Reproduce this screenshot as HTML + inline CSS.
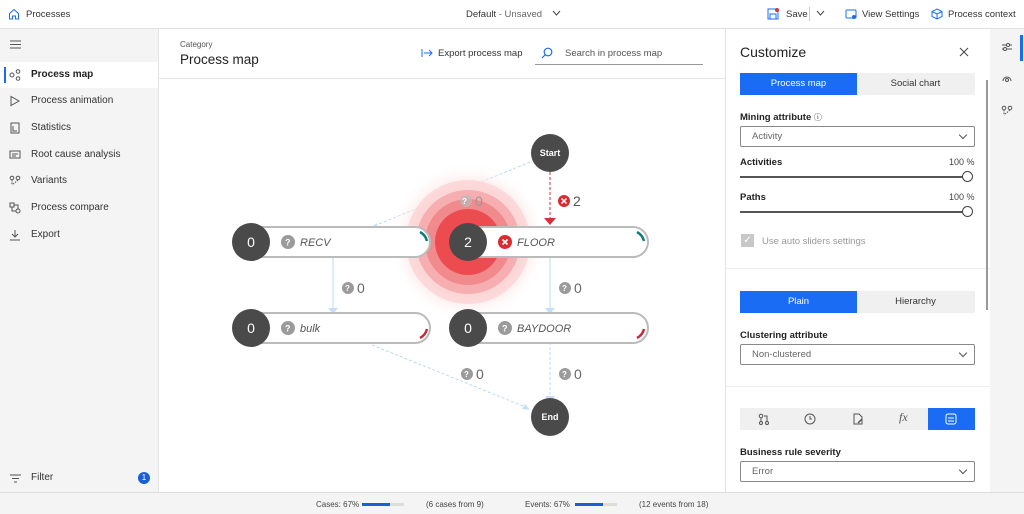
<!DOCTYPE html>
<html><head><meta charset="utf-8"><style>
*{box-sizing:border-box;margin:0;padding:0}
body{width:1024px;height:514px;overflow:hidden;font-family:"Liberation Sans",sans-serif;font-size:10px;color:#222;background:#fff;position:relative}
.a{position:absolute}
.top{left:0;top:0;width:1024px;height:29px;border-bottom:1px solid #e1e1e1;background:#fff}
.side{left:0;top:29px;width:159px;height:463px;background:#f4f4f4;border-right:1px solid #e4e4e4}
.item{position:absolute;left:0;width:158px;height:26px;font-size:10px;color:#333;padding-left:31px;line-height:26px}
.item svg{position:absolute;left:9px;top:7px}
.panel{left:725px;top:29px;width:265px;height:463px;background:#fff;border-left:1px solid #e4e4e4}
.rail{left:990px;top:29px;width:34px;height:463px;background:#f4f4f4}
.status{left:0;top:492px;width:1024px;height:22px;background:#f4f4f4;border-top:1px solid #ddd;font-size:8px;color:#444}
.lab{font-size:9.5px;font-weight:bold;color:#222}
.sel{position:absolute;left:740px;width:235px;height:21px;border:1px solid #888;border-radius:2px;font-size:9.5px;color:#666;padding-left:11px;line-height:19px}
.sel:after{content:"";position:absolute;right:8px;top:5px;width:5px;height:5px;border-right:1px solid #555;border-bottom:1px solid #555;transform:rotate(45deg)}
.tog{position:absolute;left:740px;width:235px;height:22px;background:#f0f0f0;font-size:9.5px}
.tog div{position:absolute;top:0;height:22px;width:117px;line-height:22px;text-align:center;color:#333}
.tog .on{background:#1a6cf5;color:#fff;left:0}
</style></head><body>
<div class="a top">
 <svg class="a" style="left:8px;top:8px" width="12" height="12" viewBox="0 0 12 12"><path d="M1.5 5.5L6 1.5l4.5 4V11H7.5V8h-3v3h-3z" fill="none" stroke="#1a6cf5"/></svg>
 <div class="a" style="left:26px;top:9px;font-size:9.5px;color:#333">Processes</div>
 <div class="a" style="left:466px;top:9px;font-size:9.5px;color:#333">Default <span style="color:#666">- Unsaved</span></div>
 <svg class="a" style="left:552px;top:10px" width="9" height="7"><path d="M1 1l3.5 4L8 1" fill="none" stroke="#444"/></svg>
 <svg class="a" style="left:767px;top:8px" width="12" height="12"><rect x="1" y="1" width="10" height="10" fill="none" stroke="#1a6cf5"/><rect x="3" y="6" width="6" height="5" fill="none" stroke="#1a6cf5"/><circle cx="10" cy="2" r="2" fill="#d13438"/></svg>
 <div class="a" style="left:786px;top:9px;font-size:9.5px;color:#333">Save</div>
 <div class="a" style="left:809px;top:7px;width:1px;height:14px;background:#ccc"></div>
 <svg class="a" style="left:816px;top:10px" width="9" height="7"><path d="M1 1l3.5 4L8 1" fill="none" stroke="#444"/></svg>
 <svg class="a" style="left:845px;top:8px" width="12" height="12"><rect x="1" y="2" width="10" height="8" rx="1" fill="none" stroke="#1a6cf5"/><circle cx="9" cy="9" r="2" fill="#1a6cf5"/></svg>
 <div class="a" style="left:862px;top:9px;font-size:9.5px;color:#333">View Settings</div>
 <svg class="a" style="left:931px;top:8px" width="12" height="12"><path d="M6 1l5 2.5v5L6 11 1 8.5v-5z M1 3.5L6 6l5-2.5 M6 6v5" fill="none" stroke="#1a6cf5"/></svg>
 <div class="a" style="left:948px;top:9px;font-size:9.5px;color:#333">Process context</div>
</div>

<div class="a side">
 <svg class="a" style="left:10px;top:11px" width="11" height="9"><path d="M0 1h11M0 4.5h11M0 8h11" stroke="#555"/></svg>
 <div class="item" style="top:33px;background:#fff;font-weight:bold;color:#222"><div class="a" style="left:4px;top:5px;width:2px;height:16px;background:#1a6cf5"></div><svg width="12" height="12"><circle cx="3" cy="6" r="2" fill="none" stroke="#555"/><circle cx="9" cy="2.5" r="1.8" fill="none" stroke="#555"/><circle cx="9" cy="9.5" r="1.8" fill="none" stroke="#555"/></svg>Process map</div>
 <div class="item" style="top:59px"><svg width="12" height="12"><path d="M2 1.5v9l8-4.5z" fill="none" stroke="#555"/></svg>Process animation</div>
 <div class="item" style="top:86px"><svg width="12" height="12"><rect x="2" y="1" width="8" height="10" fill="none" stroke="#555"/><path d="M4 4v5h4" fill="none" stroke="#555"/></svg>Statistics</div>
 <div class="item" style="top:113px"><svg width="12" height="12"><rect x="1" y="2" width="10" height="7" fill="none" stroke="#555"/><path d="M3 5h6M3 7h4" stroke="#555"/></svg>Root cause analysis</div>
 <div class="item" style="top:139px"><svg width="12" height="12"><circle cx="3" cy="3" r="1.8" fill="none" stroke="#555"/><circle cx="9" cy="3" r="1.8" fill="none" stroke="#555"/><path d="M3 5v5M9 5l-6 5" stroke="#555" stroke-dasharray="1.5 1"/></svg>Variants</div>
 <div class="item" style="top:166px"><svg width="12" height="12"><rect x="1" y="1" width="4" height="4" fill="none" stroke="#555"/><circle cx="9" cy="9" r="2" fill="none" stroke="#555"/><path d="M3 5v4h4M9 7V3H5" fill="none" stroke="#555"/></svg>Process compare</div>
 <div class="item" style="top:193px"><svg width="12" height="12"><path d="M6 1v7M3 5l3 3 3-3M1 11h10" fill="none" stroke="#555"/></svg>Export</div>
 <svg class="a" style="left:10px;top:445px" width="11" height="9"><path d="M0 1h11M2 4.5h7M4 8h3" stroke="#555"/></svg>
 <div class="a" style="left:31px;top:443px;font-size:10px;color:#333">Filter</div>
 <div class="a" style="left:138px;top:443px;width:12px;height:12px;border-radius:6px;background:#1a5fd6;color:#fff;font-size:8px;text-align:center;line-height:12px">1</div>
</div>

<div class="a" style="left:159px;top:29px;width:566px;height:50px;border-bottom:1px solid #e6e6e6"></div>
<div class="a" style="left:180px;top:40px;font-size:8px;color:#555">Category</div>
<div class="a" style="left:180px;top:52px;font-size:13.5px;color:#222">Process map</div>
<svg class="a" style="left:421px;top:48px" width="12" height="10"><path d="M1 1v8M3 5h8M8 2l3 3-3 3" fill="none" stroke="#1a6cf5"/></svg>
<div class="a" style="left:438px;top:48px;font-size:9.5px;color:#333">Export process map</div>
<svg class="a" style="left:541px;top:47px" width="12" height="12"><circle cx="7" cy="5" r="3.8" fill="none" stroke="#1a6cf5" stroke-width="1.2"/><path d="M4.3 7.7L1 11" stroke="#1a6cf5" stroke-width="1.2"/></svg>
<div class="a" style="left:565px;top:48px;font-size:9.5px;color:#555">Search in process map</div>
<div class="a" style="left:535px;top:64px;width:168px;height:1px;background:#999"></div>

<svg class="a" style="left:159px;top:79px" width="566" height="413" viewBox="159 79 566 413">
 <defs><radialGradient id="g"><stop offset="0" stop-color="#f5a0a2"/><stop offset="0.6" stop-color="#fbd0d1"/><stop offset="1" stop-color="#fff" stop-opacity="0"/></radialGradient></defs>
 <g stroke="#b9d8f4" fill="none">
  <path d="M530 162L374 226" stroke-dasharray="3 2"/>
  <path d="M333 258V310"/>
  <path d="M550 258V310"/>
  <path d="M372 345L528 408" stroke-dasharray="3 2"/>
  <path d="M550 342V396" stroke-dasharray="3 2"/>
 </g>
 <circle cx="468" cy="242" r="80" fill="url(#g)"/>
 <circle cx="468" cy="242" r="62" fill="#fbd3d4" opacity=".8"/>
 <circle cx="468" cy="242" r="52" fill="#f6aeb0"/>
 <circle cx="468" cy="242" r="43" fill="#f18a8d"/>
 <circle cx="468" cy="242" r="33" fill="#ec4b50"/>
 <g fill="#c5dff6"><path d="M370 228l7-5 -1 6z"/><path d="M328 308h10l-5 6z"/><path d="M545 308h10l-5 6z"/><path d="M530 410l-8 -1 3-5z"/><path d="M545 396h10l-5 6z"/></g>
 <path d="M550 172V218" stroke="#d13438" stroke-dasharray="3 2"/><path d="M544 218h12l-6 7z" fill="#d13438"/>
 <g font-family="Liberation Sans" font-size="14" fill="#666">
  <circle cx="466" cy="201" r="6" fill="#bbb" opacity=".7"/><text x="475" y="206" fill="#999">0</text>
  <circle cx="348" cy="288" r="6" fill="#9b9b9b"/><text x="357" y="293">0</text>
  <circle cx="565" cy="288" r="6" fill="#9b9b9b"/><text x="574" y="293">0</text>
  <circle cx="467" cy="374" r="6" fill="#9b9b9b"/><text x="476" y="379">0</text>
  <circle cx="565" cy="374" r="6" fill="#9b9b9b"/><text x="574" y="379">0</text>
  <circle cx="564" cy="201" r="6" fill="#d92b31"/><text x="573" y="206" fill="#555">2</text>
 </g>
 <g fill="#fff" font-size="8" font-weight="bold" font-family="Liberation Sans"><text x="462" y="204">?</text><text x="345" y="291">?</text><text x="562" y="291">?</text><text x="464" y="377">?</text><text x="562" y="377">?</text><path d="M561.5 198.5l5 5M566.5 198.5l-5 5" stroke="#fff" stroke-width="1.5"/></g>
 <g>
  <rect x="245" y="227" width="185" height="30" rx="15" fill="#fff" stroke="#bbb" stroke-width="2"/>
  <rect x="462" y="227" width="186" height="30" rx="15" fill="#fff" stroke="#bbb" stroke-width="2"/>
  <rect x="245" y="313" width="185" height="30" rx="15" fill="#fff" stroke="#bbb" stroke-width="2"/>
  <rect x="462" y="313" width="186" height="30" rx="15" fill="#fff" stroke="#bbb" stroke-width="2"/>
  <g fill="none" stroke-width="2.5"><path d="M420 232a14 14 0 0 1 7 9" stroke="#0f7b7b"/><path d="M637 232a14 14 0 0 1 7 9" stroke="#0f7b7b"/><path d="M427 329a14 14 0 0 1 -7 9" stroke="#c4283a"/><path d="M644 329a14 14 0 0 1 -7 9" stroke="#c4283a"/></g>
  <g fill="#4a4a4a"><circle cx="251" cy="242" r="19"/><circle cx="468" cy="242" r="19"/><circle cx="251" cy="328" r="19"/><circle cx="468" cy="328" r="19"/><circle cx="550" cy="153" r="19"/><circle cx="550" cy="417" r="19"/></g>
  <g fill="#fff" font-family="Liberation Sans" text-anchor="middle"><text x="251" y="247" font-size="14">0</text><text x="468" y="247" font-size="14">2</text><text x="251" y="333" font-size="14">0</text><text x="468" y="333" font-size="14">0</text><text x="550" y="156" font-size="9" font-weight="bold">Start</text><text x="550" y="420" font-size="9" font-weight="bold">End</text></g>
  <g><circle cx="288" cy="242" r="7" fill="#9b9b9b"/><circle cx="288" cy="328" r="7" fill="#9b9b9b"/><circle cx="505" cy="328" r="7" fill="#9b9b9b"/><circle cx="505" cy="242" r="7" fill="#d92b31"/></g>
  <g fill="#fff" font-size="9" font-weight="bold" font-family="Liberation Sans"><text x="285" y="245.5">?</text><text x="285" y="331.5">?</text><text x="502" y="331.5">?</text><path d="M502.5 239.5l5 5M507.5 239.5l-5 5" stroke="#fff" stroke-width="1.6"/></g>
  <g fill="#555" font-size="11" font-style="italic" font-family="Liberation Sans"><text x="300" y="246">RECV</text><text x="517" y="246">FLOOR</text><text x="300" y="332">bulk</text><text x="517" y="332">BAYDOOR</text></g>
 </g>
</svg>

<div class="a panel"></div>
<div class="a" style="left:740px;top:44px;font-size:14px;color:#222">Customize</div>
<svg class="a" style="left:959px;top:47px" width="10" height="10"><path d="M1 1l8 8M9 1l-8 8" stroke="#444"/></svg>
<div class="tog" style="top:73px"><div class="on">Process map</div><div style="left:117px">Social chart</div></div>
<div class="a lab" style="left:740px;top:112px">Mining attribute <span style="font-weight:normal;font-size:8px">ⓘ</span></div>
<div class="sel" style="top:126px">Activity</div>
<div class="a lab" style="left:740px;top:157px">Activities</div><div class="a" style="left:949px;top:157px;font-size:9px;color:#444">100 %</div>
<div class="a" style="left:740px;top:176px;width:228px;height:2px;background:#555"></div>
<div class="a" style="left:962px;top:171px;width:11px;height:11px;border-radius:6px;border:1.5px solid #444;background:#fff"></div>
<div class="a lab" style="left:740px;top:192px">Paths</div><div class="a" style="left:949px;top:192px;font-size:9px;color:#444">100 %</div>
<div class="a" style="left:740px;top:211px;width:228px;height:2px;background:#555"></div>
<div class="a" style="left:962px;top:206px;width:11px;height:11px;border-radius:6px;border:1.5px solid #444;background:#fff"></div>
<div class="a" style="left:741px;top:234px;width:13px;height:13px;background:#c8c8c8;color:#fff;font-size:10px;text-align:center;line-height:13px">✓</div>
<div class="a" style="left:762px;top:236px;font-size:9.5px;color:#999">Use auto sliders settings</div>
<div class="a" style="left:726px;top:268px;width:264px;height:1px;background:#eee"></div>
<div class="tog" style="top:291px"><div class="on">Plain</div><div style="left:117px">Hierarchy</div></div>
<div class="a lab" style="left:740px;top:330px">Clustering attribute</div>
<div class="sel" style="top:344px">Non-clustered</div>
<div class="a" style="left:726px;top:386px;width:264px;height:1px;background:#eee"></div>
<div class="a" style="left:740px;top:408px;width:235px;height:22px;background:#f0f0f0"></div>
<div class="a" style="left:928px;top:408px;width:47px;height:22px;background:#1a6cf5"></div>
<svg class="a" style="left:758px;top:413px" width="12" height="12"><circle cx="3" cy="3" r="1.8" fill="none" stroke="#555"/><circle cx="3" cy="10" r="1.5" fill="none" stroke="#555"/><circle cx="9" cy="10" r="1.5" fill="none" stroke="#555"/><path d="M3 5v3M9 8V3H6" fill="none" stroke="#555"/></svg>
<svg class="a" style="left:804px;top:413px" width="12" height="12"><circle cx="6" cy="6" r="5" fill="none" stroke="#555"/><path d="M6 3v3h2" fill="none" stroke="#555"/></svg>
<svg class="a" style="left:852px;top:413px" width="12" height="12"><path d="M2 1h5l3 3v7H2z" fill="none" stroke="#555"/><path d="M6 10l4-4" stroke="#555" stroke-width="1.5"/></svg>
<div class="a" style="left:899px;top:410px;font-size:12px;color:#555;font-family:'Liberation Serif',serif;font-style:italic">fx</div>
<svg class="a" style="left:945px;top:413px" width="12" height="12"><rect x="1" y="1" width="10" height="10" rx="2" fill="none" stroke="#fff"/><path d="M3 5h6M3 8h6" stroke="#fff"/></svg>
<div class="a lab" style="left:740px;top:447px">Business rule severity</div>
<div class="sel" style="top:461px">Error</div>
<div class="a" style="left:986px;top:80px;width:2px;height:230px;background:#999"></div>

<div class="a rail">
 <div class="a" style="left:30px;top:6px;width:3px;height:26px;background:#1a6cf5"></div>
 <svg class="a" style="left:11px;top:12px" width="12" height="12"><path d="M1 4h10M1 8h10" stroke="#555"/><circle cx="7" cy="4" r="1.5" fill="#fff" stroke="#555"/><circle cx="4" cy="8" r="1.5" fill="#fff" stroke="#555"/></svg>
 <svg class="a" style="left:11px;top:43px" width="12" height="12"><path d="M2 9a4 4 0 0 1 8 0" fill="none" stroke="#555"/><circle cx="6" cy="8" r="1.5" fill="none" stroke="#555"/></svg>
 <svg class="a" style="left:11px;top:76px" width="12" height="12"><circle cx="3" cy="3" r="1.8" fill="none" stroke="#555"/><circle cx="9" cy="3" r="1.8" fill="none" stroke="#555"/><path d="M3 5v5M9 5l-6 5" stroke="#555" stroke-dasharray="1.5 1"/></svg>
</div>

<div class="a status">
 <div class="a" style="left:316px;top:7px">Cases: 67%</div>
 <div class="a" style="left:362px;top:10px;width:42px;height:3px;background:#ddd"><div style="width:28px;height:3px;background:#1a5fd6"></div></div>
 <div class="a" style="left:426px;top:7px">(6 cases from 9)</div>
 <div class="a" style="left:525px;top:7px">Events: 67%</div>
 <div class="a" style="left:575px;top:10px;width:42px;height:3px;background:#ddd"><div style="width:28px;height:3px;background:#1a5fd6"></div></div>
 <div class="a" style="left:639px;top:7px">(12 events from 18)</div>
</div>
</body></html>
